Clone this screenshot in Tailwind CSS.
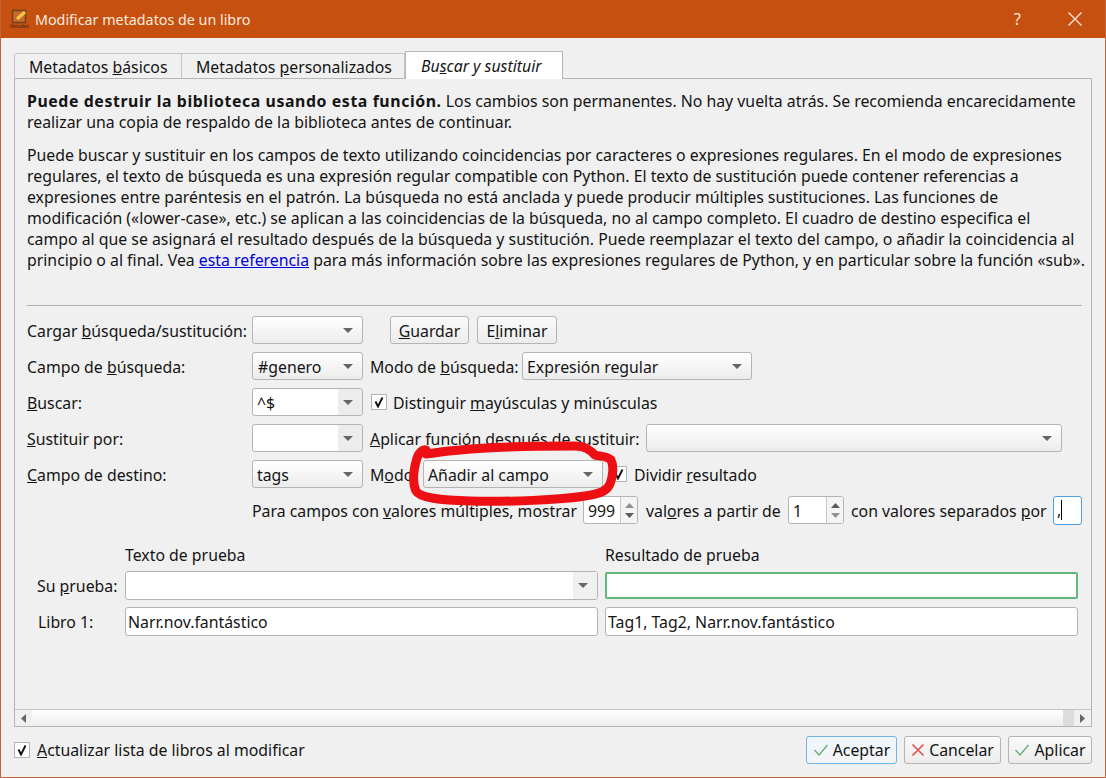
<!DOCTYPE html>
<html lang="es"><head><meta charset="utf-8"><script src="https://cdn.jsdelivr.net/npm/@tailwindcss/browser@4"></script></head>
<body class="m-0 overflow-hidden">
<div class="relative w-[1106px] h-[778px] flex flex-col bg-[#f0f0f0] border-x border-b border-[#c6633a] font-['Noto_Sans','Open_Sans',sans-serif] text-[15.83px] leading-[21px] text-[#141414] overflow-hidden">
  <div class="h-[38px] shrink-0 bg-[#c5500f] flex items-center text-[#fbeadf] -mx-px">
    <svg class="ml-[10px] mr-[6px]" width="19" height="20" viewBox="0 0 19 20"><rect x="2.500" y="1.500" width="13" height="12" fill="#c8682a" stroke="#70401f" stroke-width="1.500"/><path d="M7 10 L15 3" stroke="#f6c945" stroke-width="3"/><text x="0" y="18.500" font-size="4.600" fill="#4a2a12">Metadata</text></svg>
    <span class="text-[14.300px]">Modificar metadatos de un libro</span>
    <span class="ml-auto w-[14px] text-[16px] mr-[39px]">?</span>
    <svg class="mr-[23px]" width="16" height="16" viewBox="0 0 16 16"><path d="M1.500 1.500 L14.500 14.500 M14.500 1.500 L1.500 14.500" stroke="#fbeadf" stroke-width="1.300"/></svg>
  </div>
  <div class="flex flex-col pl-[13px] pr-[13px] flex-1 min-h-0">
    <div class="flex h-[28px] mt-[13px] items-end relative z-10">
      <div class="w-[168px] h-[26px] border border-[#c4c4c4] border-b-[#b5b5b5] bg-[#f0f0f0] pl-[14px] flex items-center rounded-tl-[2px] pt-[2px]"><span>Metadatos <u>b</u>ásicos</span></div>
      <div class="w-[223px] h-[26px] border-y border-r border-[#c4c4c4] border-b-[#b5b5b5] bg-[#f0f0f0] pl-[14px] flex items-center pt-[2px]"><span>Metadatos <u>p</u>ersonalizados</span></div>
      <div class="w-[158px] h-[28px] border-x border-t border-[#b5b5b5] bg-white pl-[15px] flex items-center pt-[2px]"><span class="block w-[127px] overflow-hidden italic whitespace-nowrap">Bu<u>s</u>car y sustituir</span></div>
    </div>
    <div class="w-[1078px] h-[649px] border border-[#b5b5b5] -mt-px flex flex-col">
      <div class="pl-[12px] pt-[12px] whitespace-nowrap">
        <p class="mb-[12px]"><b class="tracking-[0.6px]">Puede destruir la biblioteca usando esta función.</b> Los cambios son permanentes. No hay vuelta atrás. Se recomienda encarecidamente<br>realizar una copia de respaldo de la biblioteca antes de continuar.</p>
        <p>Puede buscar y sustituir en los campos de texto utilizando coincidencias por caracteres o expresiones regulares. En el modo de expresiones<br>regulares, el texto de búsqueda es una expresión regular compatible con Python. El texto de sustitución puede contener referencias a<br>expresiones entre paréntesis en el patrón. La búsqueda no está anclada y puede producir múltiples sustituciones. Las funciones de<br>modificación («lower-case», etc.) se aplican a las coincidencias de la búsqueda, no al campo completo. El cuadro de destino especifica el<br>campo al que se asignará el resultado después de la búsqueda y sustitución. Puede reemplazar el texto del campo, o añadir la coincidencia al<br>principio o al final. Vea <a class="text-[#0000e0] underline">esta referencia</a> para más información sobre las expresiones regulares de Python, y en particular sobre la función «sub».</p>
      </div>
      <div class="ml-[12px] mr-[9px] mt-[34px] h-px bg-[#b0b0b0]"></div>
      <div class="ml-[12px] mt-[10px] flex flex-col gap-[8px] whitespace-nowrap">
        <div class="flex h-[28px] items-center">
          <span class="w-[225px] pt-[2px]">Cargar <u>b</u>úsqueda/sustitución:</span>
          <div class="w-[111px] h-[28px] border border-[#b4b4b4] rounded-[3px] bg-gradient-to-b from-white to-[#ececec] flex items-center justify-end pr-[9px]"><svg width="10" height="5" viewBox="0 0 10 5"><path d="M0 0H10L5 5Z" fill="#666"/></svg></div>
          <div class="ml-[27px] w-[79px] h-[28px] border border-[#b4b4b4] rounded-[3px] bg-gradient-to-b from-[#fafafa] to-[#ececec] flex items-center justify-center pt-[2px]"><span><u>G</u>uardar</span></div>
          <div class="ml-[8px] w-[80px] h-[28px] border border-[#b4b4b4] rounded-[3px] bg-gradient-to-b from-[#fafafa] to-[#ececec] flex items-center justify-center pt-[2px]"><span>E<u>l</u>iminar</span></div>
        </div>
        <div class="flex h-[28px] items-center">
          <span class="w-[225px] pt-[2px]">Campo de <u>b</u>úsqueda:</span>
          <div class="w-[111px] h-[28px] border border-[#b4b4b4] rounded-[3px] bg-gradient-to-b from-white to-[#ececec] flex items-center justify-between pl-[5px] pr-[9px]"><span class="pt-[2px]">#genero</span><svg width="10" height="5" viewBox="0 0 10 5"><path d="M0 0H10L5 5Z" fill="#666"/></svg></div>
          <span class="ml-[7px] w-[152px] pt-[2px]">Modo de <u>b</u>úsqueda:</span>
          <div class="w-[230px] h-[28px] border border-[#b4b4b4] rounded-[3px] bg-gradient-to-b from-white to-[#ececec] flex items-center justify-between pl-[4px] pr-[9px]"><span class="pt-[2px]">Expresión regular</span><svg width="10" height="5" viewBox="0 0 10 5"><path d="M0 0H10L5 5Z" fill="#666"/></svg></div>
        </div>
        <div class="flex h-[28px] items-center">
          <span class="w-[225px] pt-[2px]"><u>B</u>uscar:</span>
          <div class="w-[111px] h-[28px] border border-[#b4b4b4] rounded-[3px] bg-white flex items-center overflow-hidden"><span class="pl-[4px] flex-1 pt-[2px]">^$</span><div class="w-[24px] h-full bg-[#ececec] flex items-center justify-end pr-[9px]"><svg width="10" height="5" viewBox="0 0 10 5"><path d="M0 0H10L5 5Z" fill="#666"/></svg></div></div>
          <div class="ml-[8px] w-[16px] h-[16px] border border-[#b4b4b4] bg-white flex items-center justify-center"><svg width="12" height="12" viewBox="0 0 12 12"><path d="M2.500 5.500L5 10.500L9.500 1.500" fill="none" stroke="#111" stroke-width="1.900"/></svg></div>
          <span class="ml-[6px] pt-[2px]">Distinguir <u>m</u>ayúsculas y minúsculas</span>
        </div>
        <div class="flex h-[28px] items-center">
          <span class="w-[225px] pt-[2px]"><u>S</u>ustituir por:</span>
          <div class="w-[111px] h-[28px] border border-[#b4b4b4] rounded-[3px] bg-white flex items-center overflow-hidden"><span class="flex-1"></span><div class="w-[24px] h-full bg-[#ececec] flex items-center justify-end pr-[9px]"><svg width="10" height="5" viewBox="0 0 10 5"><path d="M0 0H10L5 5Z" fill="#666"/></svg></div></div>
          <span class="ml-[7px] w-[276px] pt-[2px]"><u>A</u>plicar función después de sustituir:</span>
          <div class="w-[416px] h-[28px] border border-[#b4b4b4] rounded-[3px] bg-gradient-to-b from-white to-[#ececec] flex items-center justify-end pr-[9px]"><svg width="10" height="5" viewBox="0 0 10 5"><path d="M0 0H10L5 5Z" fill="#666"/></svg></div>
        </div>
        <div class="flex h-[28px] items-center">
          <span class="w-[225px] pt-[2px]"><u>C</u>ampo de destino:</span>
          <div class="w-[111px] h-[28px] border border-[#b4b4b4] rounded-[3px] bg-gradient-to-b from-white to-[#ececec] flex items-center justify-between pl-[4px] pr-[9px]"><span class="pt-[2px]">tags</span><svg width="10" height="5" viewBox="0 0 10 5"><path d="M0 0H10L5 5Z" fill="#666"/></svg></div>
          <span class="ml-[7px] w-[53px] pt-[2px]">M<u>o</u>do</span>
          <div class="w-[180px] h-[28px] border border-[#b4b4b4] rounded-[3px] bg-gradient-to-b from-white to-[#ececec] flex items-center justify-between pl-[4px] pr-[9px]"><span class="pt-[2px]">Añadir al campo</span><svg width="10" height="5" viewBox="0 0 10 5"><path d="M0 0H10L5 5Z" fill="#666"/></svg></div>
          <div class="ml-[8px] w-[16px] h-[16px] border border-[#b4b4b4] bg-white flex items-center justify-center"><svg width="12" height="12" viewBox="0 0 12 12"><path d="M2.500 5.500L5 10.500L9.500 1.500" fill="none" stroke="#111" stroke-width="1.900"/></svg></div>
          <span class="ml-[7px] pt-[2px]">Dividir <u>r</u>esultado</span>
        </div>
        <div class="flex h-[28px] items-center pl-[225px]">
          <span class="w-[331px] pt-[2px]">Para campos con <u>v</u>alores múltiples, mostrar</span>
          <div class="w-[55px] h-[28px] border border-[#b4b4b4] rounded-[3px] bg-white flex items-center overflow-hidden"><span class="pl-[4px] flex-1 pt-[2px]">999</span><div class="w-[17px] h-full border-l border-[#c8c8c8] bg-[#f4f4f4] flex flex-col items-center justify-center gap-[5px]"><svg width="9" height="5" viewBox="0 0 9 5"><path d="M0 5H9L4.500 0Z" fill="#8f8f8f"/></svg><svg width="9" height="5" viewBox="0 0 9 5"><path d="M0 0H9L4.500 5Z" fill="#5c5c5c"/></svg></div></div>
          <span class="ml-[8px] w-[142px] pt-[2px]">val<u>o</u>res a partir de</span>
          <div class="w-[56px] h-[28px] border border-[#b4b4b4] rounded-[3px] bg-white flex items-center overflow-hidden"><span class="pl-[4px] flex-1 pt-[2px]">1</span><div class="w-[17px] h-full border-l border-[#c8c8c8] bg-[#f4f4f4] flex flex-col items-center justify-center gap-[5px]"><svg width="9" height="5" viewBox="0 0 9 5"><path d="M0 5H9L4.500 0Z" fill="#5c5c5c"/></svg><svg width="9" height="5" viewBox="0 0 9 5"><path d="M0 0H9L4.500 5Z" fill="#8f8f8f"/></svg></div></div>
          <span class="ml-[7px] w-[202px] pt-[2px]">con valores separados <u>p</u>or</span>
          <div class="w-[29px] h-[29px] border border-[#4d9fe0] rounded-[3px] bg-white flex items-center pl-[3px]"><span>,</span><span class="w-px h-[20px] bg-black"></span></div>
        </div>
      </div>
      <div class="mt-[20px] flex pl-[110px] h-[21px] whitespace-nowrap pt-[1px]"><span class="w-[480px]">Texto de prueba</span><span>Resultado de prueba</span></div>
      <div class="mt-[6px] flex flex-col gap-[8px]">
        <div class="flex items-center h-[28px]">
          <span class="pl-[22px] w-[110px] pt-[2px]">Su <u>p</u>rueba:</span>
          <div class="w-[473px] h-[29px] border border-[#b4b4b4] rounded-[3px] bg-white flex justify-end overflow-hidden"><div class="w-[24px] h-full bg-[#f0f0f0] flex items-center justify-end pr-[9px]"><svg width="10" height="5" viewBox="0 0 10 5"><path d="M0 0H10L5 5Z" fill="#666"/></svg></div></div>
          <div class="ml-[7px] w-[473px] h-[27px] border-2 border-[#62b77a] rounded-[2px] bg-white"></div>
        </div>
        <div class="flex items-center h-[28px]">
          <span class="pl-[23px] w-[110px] pt-[2px]">Libro 1:</span>
          <div class="w-[473px] h-[29px] border border-[#b4b4b4] rounded-[3px] bg-white flex items-center pl-[2px] pt-[2px]">Narr.nov.fantástico</div>
          <div class="ml-[7px] w-[473px] h-[29px] border border-[#b4b4b4] rounded-[3px] bg-white flex items-center pl-[2px] pt-[2px]">Tag1, Tag2, Narr.nov.fantástico</div>
        </div>
      </div>
      <div class="mt-auto h-[17px] border-t border-[#c4c4c4] flex items-stretch">
        <div class="w-[17px] flex items-center justify-center bg-[#f0f0f0]"><svg width="5" height="9" viewBox="0 0 5 9"><path d="M5 0V9L0 4.500Z" fill="#666"/></svg></div>
        <div class="flex-1 bg-gradient-to-b from-white to-[#ececec]"></div>
        <div class="w-[11px] bg-[#dcdcdc]"></div>
        <div class="w-[17px] flex items-center justify-center bg-[#f0f0f0]"><svg width="5" height="9" viewBox="0 0 5 9"><path d="M0 0V9L5 4.500Z" fill="#666"/></svg></div>
      </div>
    </div>
    <div class="flex items-center mt-[9px] h-[28px] whitespace-nowrap">
      <div class="w-[16px] h-[16px] border border-[#b4b4b4] bg-white flex items-center justify-center"><svg width="12" height="12" viewBox="0 0 12 12"><path d="M2.500 5.500L5 10.500L9.500 1.500" fill="none" stroke="#111" stroke-width="1.900"/></svg></div>
      <span class="ml-[7px]"><u>A</u>ctualizar lista de libros al modificar</span>
      <div class="ml-auto w-[91px] h-[28px] border border-[#6fb5ea] rounded-[3px] bg-gradient-to-b from-[#eef6fc] to-[#f4f4f4] flex items-center justify-center gap-[4px]"><svg width="16" height="14" viewBox="0 0 16 14"><path d="M1.500 7L6 12L14.500 2" fill="none" stroke="#63ab78" stroke-width="1.300"/></svg><span>Aceptar</span></div>
      <div class="ml-[7px] w-[97px] h-[28px] border border-[#b4b4b4] rounded-[3px] bg-gradient-to-b from-[#fafafa] to-[#ececec] flex items-center justify-center gap-[4px]"><svg width="14" height="14" viewBox="0 0 14 14"><path d="M1.500 1.500L12.500 12.500M12.500 1.500L1.500 12.500" fill="none" stroke="#e0524f" stroke-width="1.600"/></svg><span>Cancelar</span></div>
      <div class="ml-[7px] w-[84px] h-[28px] border border-[#b4b4b4] rounded-[3px] bg-gradient-to-b from-[#fafafa] to-[#ececec] flex items-center justify-center gap-[4px]"><svg width="16" height="14" viewBox="0 0 16 14"><path d="M1.500 7L6 12L14.500 2" fill="none" stroke="#63ab78" stroke-width="1.300"/></svg><span>Aplicar</span></div>
    </div>
  </div>
  <svg class="absolute left-[-1px] top-0 pointer-events-none" width="1106" height="778" viewBox="0 0 1106 778"><path d="M426 450 C423 449 419 452 417 458 C414 468 412 482 416 491 C420 498 440 500 470 501 C510 502 560 500 585 496 C600 494 607 491 610 484 C613 476 614 466 611 460 C606 455 600 457 595 455 C590 450 585 446 575 446 C540 446 490 447 460 450 C445 451 435 453 426 454" fill="none" stroke="#ee0f14" stroke-width="9" stroke-linecap="round" stroke-linejoin="round"/></svg>
</div>
</body></html>
